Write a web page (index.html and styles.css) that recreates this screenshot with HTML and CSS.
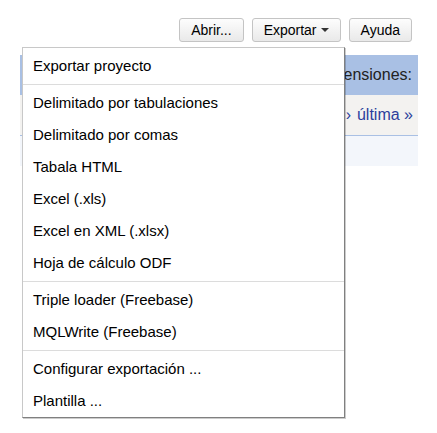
FILE: index.html
```html
<!DOCTYPE html>
<html lang="es">
<head>
<meta charset="utf-8">
<title>Exportar</title>
<link rel="stylesheet" href="styles.css">
</head>
<body>
<div class="page">
  <div class="toolbar">
    <button class="btn">Abrir...</button>
    <button class="btn btn-menu">Exportar <span class="caret"></span></button>
    <button class="btn">Ayuda</button>
  </div>
  <div class="grid">
    <div class="grid-head">Extensiones:</div>
    <div class="grid-pager"><a>›</a> <a>última »</a></div>
    <div class="grid-body"></div>
  </div>
  <div class="menu">
    <div class="menu-item">Exportar proyecto</div>
    <div class="menu-sep"></div>
    <div class="menu-item">Delimitado por tabulaciones</div>
    <div class="menu-item">Delimitado por comas</div>
    <div class="menu-item">Tabala HTML</div>
    <div class="menu-item">Excel (.xls)</div>
    <div class="menu-item">Excel en XML (.xlsx)</div>
    <div class="menu-item">Hoja de cálculo ODF</div>
    <div class="menu-sep"></div>
    <div class="menu-item">Triple loader (Freebase)</div>
    <div class="menu-item">MQLWrite (Freebase)</div>
    <div class="menu-sep"></div>
    <div class="menu-item">Configurar exportación ...</div>
    <div class="menu-item">Plantilla ...</div>
  </div>
</div>
</body>
</html>
```

FILE: styles.css
```css
html, body {
  margin: 0;
  padding: 0;
  background: #ffffff;
}
.page {
  position: relative;
  width: 437px;
  height: 433px;
  overflow: hidden;
  font-family: "Liberation Sans", Arial, sans-serif;
  color: #222;
}
.toolbar {
  display: flex;
  justify-content: flex-end;
  gap: 8px;
  padding: 18px 25px 0 0;
}
.btn {
  height: 24px;
  box-sizing: border-box;
  padding: 0 11px;
  border: 1px solid #c4c4c4;
  border-radius: 3px;
  background: linear-gradient(#fdfdfd, #e9e9e9);
  font-family: "Liberation Sans", Arial, sans-serif;
  font-size: 14px;
  color: #000;
  display: flex;
  align-items: center;
  gap: 4px;
}
.caret {
  width: 0;
  height: 0;
  border-left: 4px solid transparent;
  border-right: 4px solid transparent;
  border-top: 4px solid #333;
}
.grid {
  margin: 13px 0 0 20px;
  width: 398px;
}
.grid-head {
  height: 40px;
  background: #a9c0e4;
  display: flex;
  align-items: center;
  justify-content: flex-end;
  padding-right: 6px;
  font-size: 16px;
  color: #222;
}
.grid-pager {
  height: 40px;
  background: #f3f2f0;
  border-bottom: 1px solid #a9c0e4;
  display: flex;
  align-items: center;
  justify-content: flex-end;
  gap: 6px;
  padding-right: 5px;
  font-size: 16px;
  white-space: nowrap;
}
.grid-pager a {
  color: #2c3f9c;
}
.grid-body {
  height: 30px;
  background: #f3f6fb;
}
.menu {
  position: absolute;
  left: 22px;
  top: 47px;
  width: 321px;
  padding-top: 2px;
  background: #ffffff;
  border: 1px solid #c8c8c8;
  border-right-color: #808080;
  border-bottom-color: #808080;
  box-shadow: 1px 1px 0 rgba(0, 0, 0, 0.2);
}
.menu-item {
  height: 32px;
  line-height: 32px;
  padding: 0 10px;
  font-size: 15px;
  color: #000;
  white-space: nowrap;
}
.menu-sep {
  height: 1px;
  margin: 2px 0;
  background: #dcdcdc;
}
```
